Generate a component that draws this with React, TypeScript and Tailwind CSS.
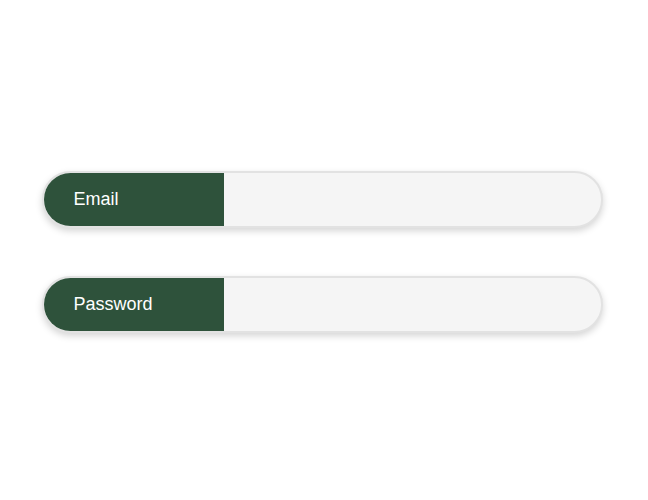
export default function App() {
  const fields = [
    { label: "Email", type: "email" },
    { label: "Password", type: "password" },
  ];

  return (
    <div className="flex h-[500px] w-full flex-col items-center justify-center gap-[48px] bg-white pr-[4px] pt-[4px] font-['Liberation_Sans',Arial,sans-serif]">
      {fields.map((f) => (
        <div
          key={f.label}
          className="flex h-[57px] w-[561px] overflow-hidden rounded-full border-2 border-[#e2e2e2] bg-[#f5f5f5] shadow-[0_3px_7px_rgba(0,0,0,0.17)]"
        >
          <label className="-my-[1px] -ml-[1px] flex w-[181px] shrink-0 items-center bg-[#2e523b] pl-[31px] text-[18px] text-white">
            {f.label}
          </label>
          <input type={f.type} className="flex-1 bg-transparent px-4 outline-none" />
        </div>
      ))}
    </div>
  );
}
